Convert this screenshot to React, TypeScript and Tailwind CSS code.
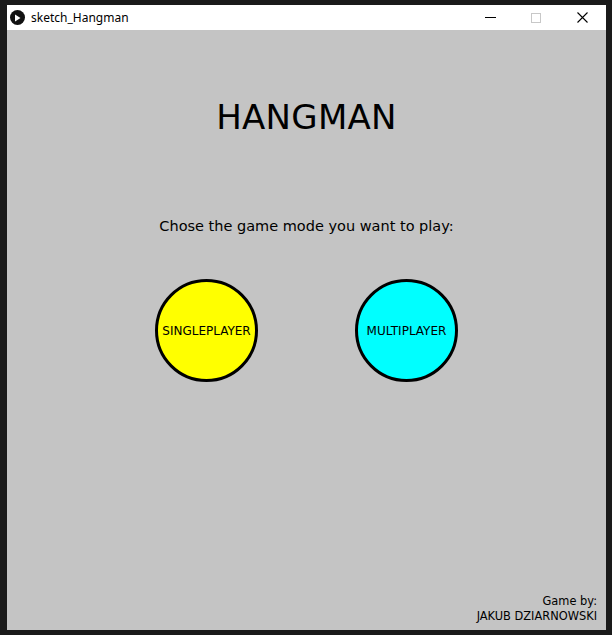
import React from 'react';

const App: React.FC = () => {
  return (
    <div className="w-[612px] h-[635px] bg-[#1a1a1a] pt-[5px] pl-[7px] pr-[6px] pb-[5px] overflow-hidden">
      {/* title bar */}
      <div className="h-[25px] bg-white flex items-center font-['Noto_Sans',sans-serif]">
        <div className="w-[15px] h-[15px] ml-[3px] rounded-full bg-[#111] flex items-center justify-center">
          <svg width="7" height="8" viewBox="0 0 7 8">
            <path d="M1 0.5 L6.5 4 L1 7.5 Z" fill="#fff" />
          </svg>
        </div>
        <span className="ml-[6px] text-[12px] text-black leading-none">sketch_Hangman</span>
        <div className="flex-1" />
        <div className="w-[46px] flex justify-center">
          <div className="w-[11px] h-px bg-black" />
        </div>
        <div className="w-[46px] flex justify-center">
          <div className="w-[10px] h-[10px] border border-[#c8c8c8]" />
        </div>
        <div className="w-[46px] flex justify-center mr-[1px]">
          <svg width="11" height="11" viewBox="0 0 11 11">
            <path d="M0.5 0.5 L10.5 10.5 M10.5 0.5 L0.5 10.5" stroke="#000" strokeWidth="1.1" />
          </svg>
        </div>
      </div>

      {/* sketch canvas */}
      <div className="h-[600px] bg-[#c4c4c4] flex flex-col items-center font-['DejaVu_Sans',sans-serif] text-black">
        <h1 className="mt-[67px] text-[34px] leading-[40px] tracking-[0.3px]">HANGMAN</h1>
        <p className="mt-[79px] text-[14.5px] leading-[20px]">Chose the game mode you want to play:</p>
        <div className="mt-[43px] flex gap-[97px]">
          <button className="w-[103px] h-[103px] rounded-full bg-[#ffff00] border-[3px] border-black flex items-center justify-center text-[12px]">
            SINGLEPLAYER
          </button>
          <button className="w-[103px] h-[103px] rounded-full bg-[#00ffff] border-[3px] border-black flex items-center justify-center text-[12px]">
            MULTIPLAYER
          </button>
        </div>
        <div className="flex-1" />
        <div className="self-end mr-[9px] mb-[6px] text-right text-[11.4px] leading-[15px]">
          <div>Game by:</div>
          <div>JAKUB DZIARNOWSKI</div>
        </div>
      </div>
    </div>
  );
};

export default App;
